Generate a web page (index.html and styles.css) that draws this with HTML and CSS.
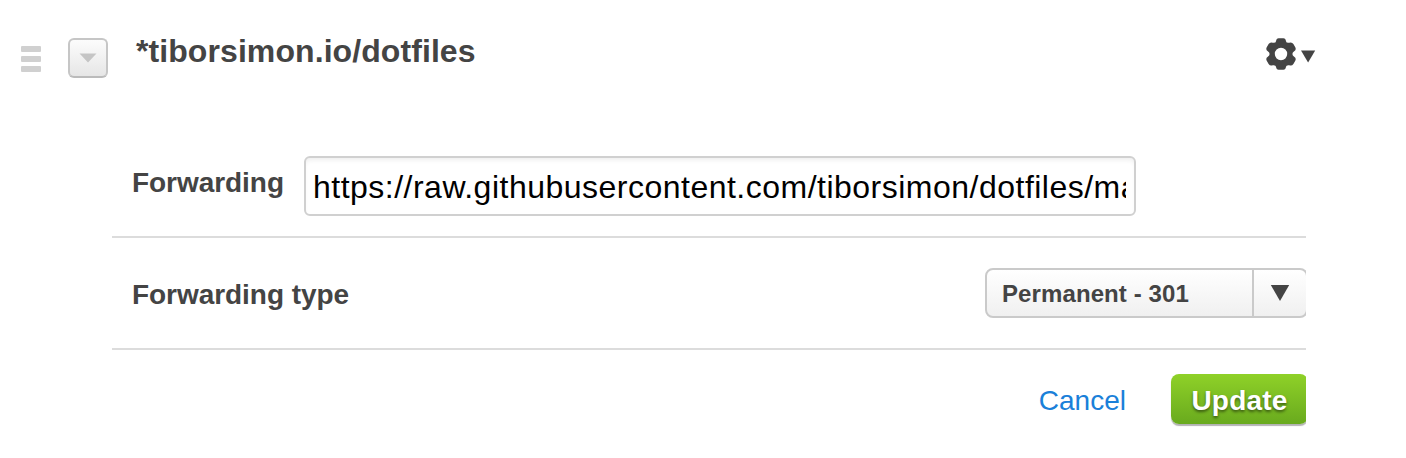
FILE: index.html
```html
<!DOCTYPE html>
<html lang="en">
<head>
<meta charset="utf-8">
<title>Page rule</title>
<link rel="stylesheet" href="styles.css">
</head>
<body>
<main class="rule">
  <header class="rule-head">
    <div class="drag"><span></span><span></span><span></span></div>
    <button class="toggle" aria-label="Collapse"><svg width="18" height="10" viewBox="0 0 18 10"><path d="M0.5 0.5h17L9 9.5z" fill="#c5c5c5"/></svg></button>
    <h1 class="title">*tiborsimon.io/dotfiles</h1>
    <button class="settings" aria-label="Settings">
      <svg width="52" height="34" viewBox="0 0 52 34">
        <g fill="#444" transform="translate(16 17)">
          <path fill-rule="evenodd" d="M-5-12.8Q-4.6-15.7-2.4-15.7H2.4Q4.6-15.7 5-12.8Q5.2-10.8 8.2-11.2Q10.8-12.3 12.4-10L14.4-6.4Q15.4-4.2 13.2-2.8Q11.4-1.8 11.4 0Q11.4 1.8 13.2 2.8Q15.4 4.2 14.4 6.4L12.4 10Q10.8 12.3 8.2 11.2Q5.2 10.8 5 12.8Q4.6 15.7 2.4 15.7H-2.4Q-4.6 15.7-5 12.8Q-5.2 10.8-8.2 11.2Q-10.8 12.3-12.4 10L-14.4 6.4Q-15.4 4.2-13.2 2.8Q-11.4 1.8-11.4 0Q-11.4-1.8-13.2-2.8Q-15.4-4.2-14.4-6.4L-12.4-10Q-10.8-12.3-8.2-11.2Q-5.2-10.8-5-12.8zM6.2 0A6.2 6.2 0 1 0-6.2 0 6.2 6.2 0 1 0 6.2 0z"/>
        </g>
        <path d="M36 13.4h14.2L43.1 25.6z" fill="#444"/>
      </svg>
    </button>
  </header>
  <form class="fields">
    <div class="row row-url">
      <label class="label" for="url">Forwarding</label>
      <input class="url" id="url" type="text" value="https://raw.githubusercontent.com/tiborsimon/dotfiles/master">
    </div>
    <div class="row row-type">
      <span class="label">Forwarding type</span>
      <div class="select">
        <span class="select-value">Permanent - 301</span>
        <span class="select-arrow"><svg width="20" height="18" viewBox="0 0 20 18"><path d="M0.8 1h18.4L10 17z" fill="#444"/></svg></span>
      </div>
    </div>
    <div class="actions">
      <a class="cancel">Cancel</a>
      <button class="update" type="button">Update</button>
    </div>
  </form>
</main>
</body>
</html>
```
FILE: styles.css
```css
* { box-sizing: border-box; }
body {
  margin: 0;
  background: #fff;
  color: #444;
  font-family: "Liberation Sans", Arial, sans-serif;
}
button { padding: 0; border: 0; background: none; font-family: inherit; }
svg { display: block; }
.rule { width: 1406px; height: 458px; overflow: hidden; }
.rule-head {
  display: flex;
  align-items: flex-start;
  height: 140px;
  padding: 31px 89px 0 21px;
}
.drag { display: grid; gap: 4px; width: 20px; margin: 15px 27px 0 0; }
.drag span { height: 6px; background: #d0d0d0; border-radius: 1px; }
.toggle {
  display: grid;
  place-items: center;
  width: 40px;
  height: 40px;
  margin: 7px 28px 0 0;
  border: 2px solid #c6c6c6;
  border-bottom-color: #bbb;
  border-radius: 6px;
  background: linear-gradient(#fcfcfc, #e6e6e6);
}
.title { margin: 0; font-size: 32px; line-height: 40px; letter-spacing: 0.08px; }
.settings { margin: 6px 0 0 auto; }
.fields { width: 1194px; margin-left: 112px; overflow: hidden; }
.row { display: flex; border-bottom: 2px solid #dcdcdc; padding-left: 20px; }
.label { font-size: 28px; font-weight: bold; letter-spacing: -0.05px; white-space: nowrap; }
.row-url { height: 98px; padding-top: 16px; }
.row-url .label { width: 172px; line-height: 53px; }
.url {
  width: 832px;
  height: 60px;
  padding: 2px 8px 0 7px;
  border: 2px solid #d0d0d0;
  border-radius: 6px;
  background: #fff;
  box-shadow: inset 0 4px 5px -2px rgba(0, 0, 0, 0.07);
  color: #000;
  font: 32px "Liberation Sans", Arial, sans-serif;
  letter-spacing: 0.49px;
}
.row-type { height: 112px; justify-content: space-between; padding-top: 30px; }
.row-type .label { line-height: 53px; }
.select {
  display: flex;
  flex: none;
  width: 323px;
  height: 50px;
  margin-right: -2px;
  border: 2px solid #cacaca;
  border-radius: 8px;
  background: linear-gradient(#fff, #f0f0f0);
}
.select-value {
  width: 267px;
  padding-left: 15px;
  border-right: 2px solid #cacaca;
  font-size: 24px;
  font-weight: bold;
  line-height: 47px;
  letter-spacing: 0.1px;
}
.select-arrow { flex: 1; display: grid; place-items: center; }
.actions {
  display: flex;
  justify-content: flex-end;
  height: 100px;
  padding-top: 24px;
}
.cancel { margin-right: 45px; color: #1a80d9; font-size: 28px; line-height: 54px; }
.update {
  width: 137px;
  height: 50px;
  margin-right: -2px;
  padding-top: 4px;
  border-radius: 8px;
  background: linear-gradient(#8fd128, #69aa1e);
  box-shadow: 0 2px 1px rgba(0, 0, 0, 0.3);
  color: #fff;
  font-size: 28px;
  font-weight: bold;
  line-height: 46px;
  letter-spacing: 0.2px;
  text-shadow: 0 2px 3px rgba(0, 0, 0, 0.5);
}
```
